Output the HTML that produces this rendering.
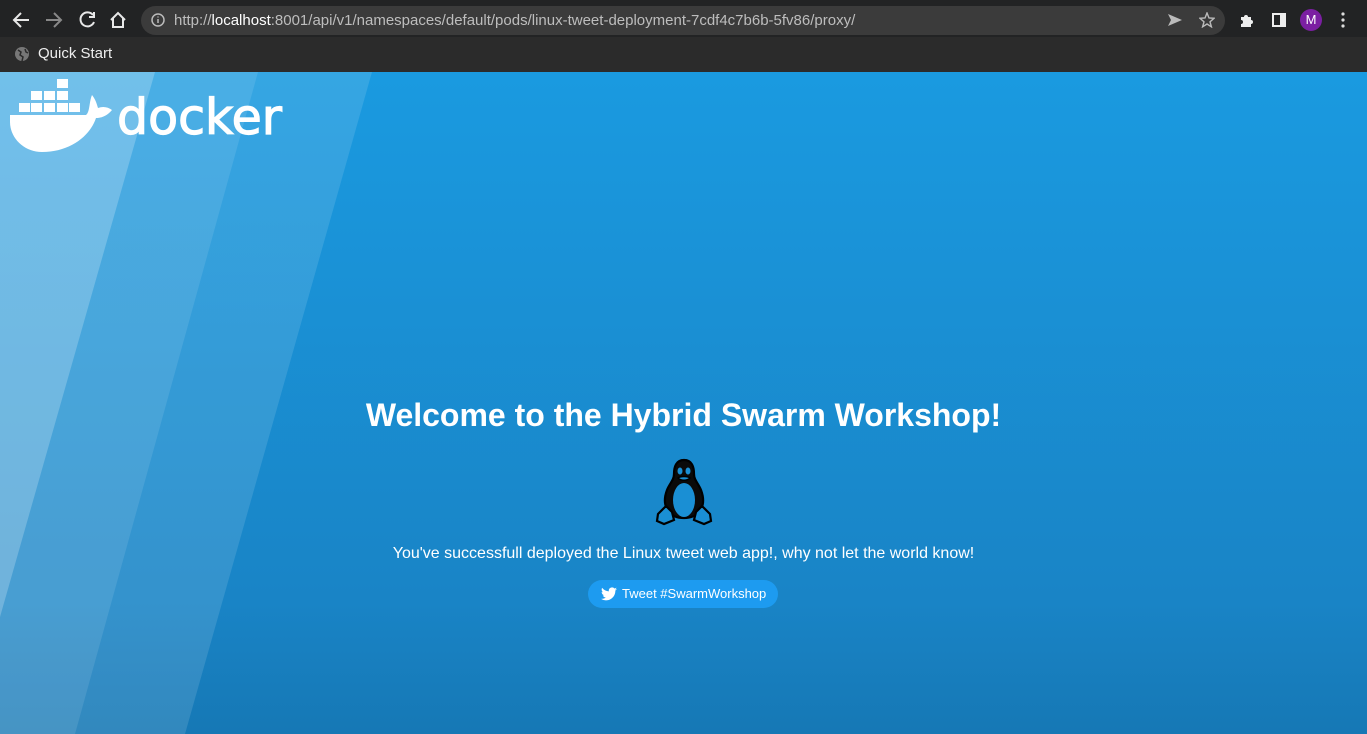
<!DOCTYPE html>
<html><head><meta charset="utf-8"><style>
*{margin:0;padding:0;box-sizing:border-box}
body{width:1367px;height:734px;overflow:hidden;font-family:"Liberation Sans",sans-serif;background:#222}
#top{position:absolute;left:0;top:0;width:1367px;height:37px;background:#222324}
#bm{position:absolute;left:0;top:37px;width:1367px;height:35px;background:#2b2b2b}
#url{position:absolute;left:141px;top:6px;width:1084px;height:29px;border-radius:15px;background:#3b3b3b;color:#bdbdbd;font-family:"Liberation Sans",sans-serif;font-size:15px;line-height:29px;padding-left:33px}
#url b{color:#fff;font-weight:normal}
#page{position:absolute;left:0;top:72px;width:1367px;height:662px;background:linear-gradient(#1a9ae0,#1984c6 80%,#1678b5)}
h1{position:absolute;left:0;width:1367px;top:397px;text-align:center;color:#fff;font-size:32px;font-weight:bold}
.msg{position:absolute;left:0;width:1367px;top:545px;text-align:center;color:#fff;font-size:16px}
.btn{position:absolute;left:588px;top:580px;width:190px;height:28px;border-radius:14px;background:#1d9bf0;color:#fff;font-size:13px;line-height:28px;padding-left:34px}
</style></head><body>
<div id="top">
<svg width="140" height="37" style="position:absolute;left:0;top:0" fill="none" stroke-width="2">
<path d="M29 20H15M21 13l-7 7 7 7" stroke="#e8e8e8"/>
<path d="M46 20h14M54 13l7 7-7 7" stroke="#888"/>
<path d="M93 15a7 7 0 1 0 1 7" stroke="#e8e8e8"/><path d="M94 12v5h-5" stroke="#e8e8e8"/>
<path d="M111 20l7-7 7 7M113 18v9h10v-9" stroke="#e8e8e8"/>
</svg>
<div id="url">http://<b>localhost</b>:8001/api/v1/namespaces/default/pods/linux-tweet-deployment-7cdf4c7b6b-5fv86/proxy/</div>
<svg width="14" height="14" style="position:absolute;left:151px;top:13px"><circle cx="7" cy="7" r="6" stroke="#bbb" stroke-width="1.5" fill="none"/><path d="M7 6v4M7 3.5v1" stroke="#bbb" stroke-width="1.5"/></svg>
<svg width="16" height="14" style="position:absolute;left:1167px;top:13px"><path d="M1 1l14 6-14 6 3-6z" fill="#bbb"/></svg>
<svg width="16" height="16" style="position:absolute;left:1199px;top:12px"><path d="M8 1l2 5 5 .3-4 3.5 1.4 5L8 12l-4.4 2.8 1.4-5-4-3.5 5-.3z" fill="none" stroke="#bbb" stroke-width="1.4"/></svg>
<svg width="16" height="16" style="position:absolute;left:1239px;top:12px"><path d="M2 5h3a2 2 0 1 1 4 0h3v3a2 2 0 1 1 0 4v3H2v-3a2 2 0 1 0 0-4z" fill="#eee"/></svg>
<svg width="14" height="14" style="position:absolute;left:1272px;top:13px"><rect x="1" y="1" width="12" height="12" fill="none" stroke="#eee" stroke-width="2"/><rect x="8" y="1" width="5" height="12" fill="#eee"/></svg>
<div style="position:absolute;left:1300px;top:9px;width:22px;height:22px;border-radius:50%;background:#7b1fa2;color:#fff;font-size:13px;line-height:22px;text-align:center">M</div>
<svg width="6" height="16" style="position:absolute;left:1340px;top:12px"><circle cx="3" cy="2" r="1.6" fill="#ddd"/><circle cx="3" cy="8" r="1.6" fill="#ddd"/><circle cx="3" cy="14" r="1.6" fill="#ddd"/></svg>
</div>
<div id="bm">
<svg width="16" height="16" style="position:absolute;left:14px;top:9px"><circle cx="8" cy="8" r="7" fill="#777"/><path d="M4 4l3 2-1 3 3 2-1 4M11 3l1 3 2 1" stroke="#2b2b2b" stroke-width="1.5" fill="none"/></svg>
<div style="position:absolute;left:38px;top:8px;color:#eee;font-size:15px">Quick Start</div>
</div>
<div id="page">
<svg width="1367" height="662" style="position:absolute;left:0;top:0">
<polygon points="0,0 372,0 185,662 0,662" fill="#fff" fill-opacity="0.12"/>
<polygon points="0,0 258,0 75,662 0,662" fill="#fff" fill-opacity="0.10"/>
<polygon points="0,0 155,0 0,545" fill="#fff" fill-opacity="0.22"/>
<g fill="#fff">
<rect x="19" y="31" width="11" height="9"/><rect x="31" y="31" width="11" height="9"/><rect x="44" y="31" width="11" height="9"/><rect x="57" y="31" width="11" height="9"/><rect x="69" y="31" width="11" height="9"/>
<rect x="31" y="19" width="11" height="9"/><rect x="44" y="19" width="11" height="9"/><rect x="57" y="19" width="11" height="9"/>
<rect x="57" y="7" width="11" height="9"/>
<path d="M10 43H86C90 40 89 30 92 23 96 28 97 33 98 36 103 34 108 35 112 38 106 45 100 46 96 46 90 64 70 80 42 80 24 80 10 66 10 50Z"/>
<text x="117" y="62" font-family="DejaVu Sans,sans-serif" font-size="49" stroke="#fff" stroke-width="1.2">docker</text>
</g>
</svg>
</div>
<h1>Welcome to the Hybrid Swarm Workshop!</h1>
<svg width="60" height="70" viewBox="0 0 60 70" style="position:absolute;left:654px;top:458px" fill="none" stroke="#000" stroke-width="2.2">
<path d="M30 2c-8 0-10 7-10 14 0 6-4 9-7 16-3 8-3 16 2 22 4 5 10 6 15 6s11-1 15-6c5-6 5-14 2-22-3-7-7-10-7-16 0-7-2-14-10-14z" fill="#0a0a0a"/>
<ellipse cx="30" cy="42" rx="11" ry="17" fill="#1a8fd4" stroke="none"/>
<ellipse cx="26" cy="13" rx="2.5" ry="3.5" fill="#1a8fd4" stroke="none"/><ellipse cx="34" cy="13" rx="2.5" ry="3.5" fill="#1a8fd4" stroke="none"/>
<path d="M24 20c3 3 9 3 12 0-2-2-10-2-12 0z" fill="#1a8fd4" stroke="#000" stroke-width="1.5"/>
<path d="M4 56l8-8 6 6 2 8-10 4-7-3zM56 56l-8-8-6 6-2 8 10 4 7-3z" fill="#1a8fd4"/>
</svg>
<div class="msg">You've successfull deployed the Linux tweet web app!, why not let the world know!</div>
<div class="btn">Tweet #SwarmWorkshop
<svg width="16" height="14" viewBox="0 0 24 20" style="position:absolute;left:13px;top:7px"><path d="M24 2.4a10 10 0 0 1-2.8.8A5 5 0 0 0 23.3.5a10 10 0 0 1-3.1 1.2A4.9 4.9 0 0 0 11.8 6 14 14 0 0 1 1.7.9a4.9 4.9 0 0 0 1.5 6.6A4.9 4.9 0 0 1 1 6.9 4.9 4.9 0 0 0 4.9 11.8a5 5 0 0 1-2.2.1 4.9 4.9 0 0 0 4.6 3.4A9.9 9.9 0 0 1 0 17.3 14 14 0 0 0 7.5 19.5c9 0 14-7.5 14-14v-.6A10 10 0 0 0 24 2.4z" fill="#fff"/></svg>
</div>
</body></html>
